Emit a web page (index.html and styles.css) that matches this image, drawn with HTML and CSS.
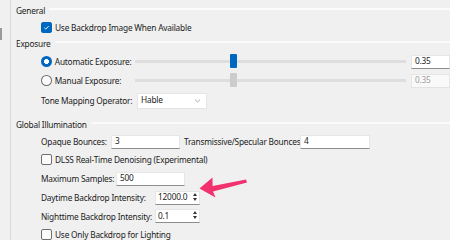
FILE: index.html
```html
<!DOCTYPE html>
<html>
<head>
<meta charset="utf-8">
<link rel="stylesheet" href="styles.css">
</head>
<body>
<div class="scroll-thumb"></div>
<div class="panel">
  <div class="group-head h-general"><span>General</span><i class="rule"></i></div>
  <div class="row r-check1"><span class="cb on"><svg viewBox="0 0 10 10" width="10" height="10"><path d="M2.6 5.2 L4.3 6.8 L7.4 3.4" fill="none" stroke="#fff" stroke-width="1"/></svg></span><span class="lbl">Use Backdrop Image When Available</span></div>

  <div class="group-head h-exposure"><span>Exposure</span><i class="rule"></i></div>
  <div class="row r-auto">
    <span class="radio on"></span><span class="lbl w-radio">Automatic Exposure:</span>
    <div class="slider"><div class="track"></div><div class="thumb"></div></div>
    <div class="field num">0.35</div>
  </div>
  <div class="row r-manual">
    <span class="radio"></span><span class="lbl w-radio">Manual Exposure:</span>
    <div class="slider off"><div class="track"></div><div class="thumb"></div></div>
    <div class="field num off">0.35</div>
  </div>
  <div class="row r-tone">
    <span class="lbl w-tone">Tone Mapping Operator:</span>
    <div class="field select">Hable<svg class="chev" viewBox="0 0 8 5" width="7" height="4"><path d="M0.8 0.8 L4 3.8 L7.2 0.8" fill="none" stroke="#8a8a8a" stroke-width="0.9"/></svg></div>
  </div>

  <div class="group-head h-gi"><span>Global Illumination</span><i class="rule"></i></div>
  <div class="row r-opaque">
    <span class="lbl w-opaque">Opaque Bounces:</span>
    <div class="field w68">3</div>
    <span class="lbl w-trans">Transmissive/Specular Bounces:</span>
    <div class="field w69">4</div>
  </div>
  <div class="row r-dlss"><span class="cb"></span><span class="lbl">DLSS Real-Time Denoising (Experimental)</span></div>
  <div class="row r-max">
    <span class="lbl w-max">Maximum Samples:</span>
    <div class="field w68">500</div>
  </div>
  <div class="row r-day">
    <span class="lbl w-day">Daytime Backdrop Intensity:</span>
    <div class="field spin">12000.0<span class="arrows"><i class="up"></i><i class="dn"></i></span></div>
  </div>
  <div class="row r-night">
    <span class="lbl w-day">Nighttime Backdrop Intensity:</span>
    <div class="field spin">0.1<span class="arrows"><i class="up"></i><i class="dn"></i></span></div>
  </div>
  <div class="row r-only"><span class="cb"></span><span class="lbl">Use Only Backdrop for Lighting</span></div>
</div>
<svg class="callout" width="60" height="30" viewBox="195 172 60 30">
  <path d="M246 179.5 L247 182.5 L213 191.5 L215.5 197.5 L199.5 188.5 L212.5 177.5 L212.6 186 Z" fill="#f2316f"/>
</svg>
</body>
</html>
```
FILE: styles.css
```css
html, body {
  margin: 0;
  padding: 0;
  background: #f0f0f0;
  width: 450px;
  height: 240px;
  overflow: hidden;
  font-family: "Noto Sans", "Open Sans", sans-serif;
  font-size: 8.3px;
  letter-spacing: -0.2px;
  color: #1b1b1b;
}
.scroll-thumb {
  position: absolute;
  left: 0;
  top: 28px;
  width: 2px;
  height: 12px;
  background: #9a9a9a;
}
.panel {
  margin-left: 10px;
  border-left: 1px solid #d9d9d9;
  padding-left: 5px;
  height: 240px;
  box-sizing: border-box;
  padding-top: 3px;
}
.group-head {
  display: flex;
  align-items: center;
  height: 14px;
}
.group-head span { padding-right: 4px; }
.group-head .rule {
  flex: 1;
  height: 0;
  border-top: 2px solid #fbfbfb;
  margin-top: -3px;
}
.row {
  display: flex;
  align-items: center;
  padding-left: 25px;
  height: 18px;
}
.r-check1 { height: 18px; margin-top: 1px; }
.r-auto { margin-top: 2px; height: 19px; }
.r-manual { height: 19px; }
.r-tone { height: 21px; }
.h-gi { margin-top: 6px; }
.r-opaque { height: 17px; margin-top: 2px; }
.r-dlss { height: 19px; }
.r-max { height: 19px; }
.r-day { height: 19px; }
.r-night { height: 18px; }
.r-only { height: 18px; }

.cb {
  width: 9px;
  height: 9px;
  border: 1px solid #6f6f6f;
  border-radius: 2px;
  background: #fbfbfb;
  margin-right: 3px;
  display: inline-flex;
  box-sizing: content-box;
}
.cb.on {
  background: #0067c0;
  border-color: #0067c0;
}
.cb svg { width: 9px; height: 9px; }
.radio {
  width: 9px;
  height: 9px;
  border: 1px solid #6f6f6f;
  border-radius: 50%;
  background: #fbfbfb;
  margin-right: 3px;
  box-sizing: content-box;
}
.radio.on {
  border: 1px solid #0067c0;
  background: radial-gradient(circle, #fff 0 2.2px, #0067c0 2.7px);
}
.lbl { white-space: nowrap; }
.w-radio { width: 82px; }
.w-tone { width: 96px; }
.w-opaque { width: 70px; }
.w-trans { width: 120px; padding-left: 4px; box-sizing: border-box; }
.w-max { width: 75px; }
.w-day { width: 114px; }

.slider {
  position: relative;
  width: 278px;
  height: 15px;
  margin-right: 5px;
}
.slider .track {
  position: absolute;
  left: 0;
  right: 0;
  top: 6px;
  height: 3px;
  background: #dedede;
}
.slider .thumb {
  position: absolute;
  left: 95px;
  top: 0;
  width: 7px;
  height: 14px;
  border-radius: 1px;
  background: #0067c0;
}
.slider.off .thumb { background: #cccccc; }

.field {
  box-sizing: border-box;
  height: 14px;
  background: #fff;
  border: 1px solid #e6e6e6;
  border-bottom-color: #8d8d8d;
  padding-left: 3px;
  display: flex;
  align-items: center;
  line-height: 1;
  position: relative;
}
.num { width: 40px; }
.num.off { background: #f9f9f9; color: #a0a0a0; border-bottom-color: #e3e3e3; }
.select { width: 70px; height: 16px; border-bottom-color: #e3e3e3; justify-content: space-between; padding-right: 5px; }
.w68 { width: 69px; }
.w69 { width: 70px; }
.spin { width: 45px; padding-left: 2px; }
.arrows {
  position: absolute;
  right: 2px;
  top: 1px;
  display: flex;
  flex-direction: column;
  gap: 2px;
}
.arrows i {
  width: 0;
  height: 0;
  border-left: 2.5px solid transparent;
  border-right: 2.5px solid transparent;
}
.arrows .up { border-bottom: 3px solid #333; }
.arrows .dn { border-top: 3px solid #333; }

.callout {
  position: absolute;
  left: 195px;
  top: 172px;
}
```
